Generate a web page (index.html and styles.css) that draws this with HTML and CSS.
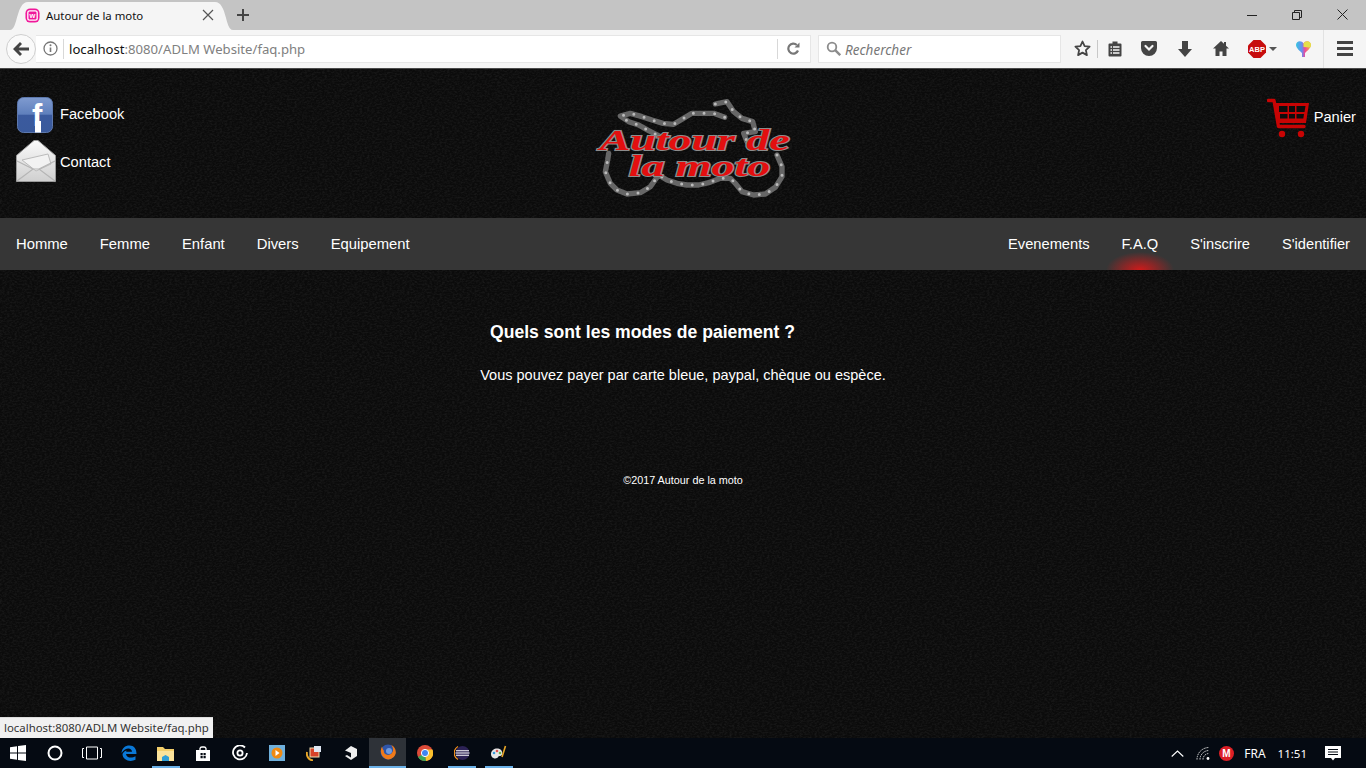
FILE: index.html
```html
<!DOCTYPE html>
<html lang="fr">

<head>
    <meta charset="UTF-8">
    <title>Autour de la moto</title>
    <link rel="stylesheet" href="styles.css">
</head>

<body>

    <!-- Browser window -->
    <div class="tabbar">
        <div class="tab">
            <svg class="favicon" width="15" height="15" viewBox="0 0 16 16">
                <rect x="0.5" y="0.5" width="15" height="15" rx="5" fill="#f0189a"/>
                <rect x="3" y="3" width="10" height="10" rx="2" fill="none" stroke="#fff" stroke-width="1.4"/>
                <text x="8" y="11" text-anchor="middle" font-size="8" font-weight="700" fill="#fff" font-family="Liberation Sans">w</text>
            </svg>
            <span class="tab-title">Autour de la moto</span>
            <svg class="tab-close" width="12" height="12" viewBox="0 0 12 12"><path d="M1 1l10 10M11 1L1 11" stroke="#555" stroke-width="1.2"/></svg>
        </div>
        <svg class="new-tab" width="12" height="12" viewBox="0 0 12 12"><path d="M6 0v12M0 6h12" stroke="#444" stroke-width="2"/></svg>
        <div class="win-controls">
            <svg width="10" height="10" viewBox="0 0 10 10"><path d="M0 5.5h10" stroke="#222"/></svg>
            <svg width="10" height="10" viewBox="0 0 10 10"><path d="M.5 2.5h7v7h-7zM2.5 2.5v-2h7v7h-2" fill="none" stroke="#222"/></svg>
            <svg width="11" height="11" viewBox="0 0 11 11"><path d="M.5.5l10 10M10.5.5l-10 10" stroke="#222"/></svg>
        </div>
    </div>

    <div class="toolbar">
        <div class="back-btn">
            <svg width="16" height="14" viewBox="0 0 16 14"><path d="M7 0L0 7l7 7 2-2-3.4-3.4H16V5.400H5.600L9 2z" fill="#444"/></svg>
        </div>
        <div class="urlbar">
            <svg class="info-icon" width="15" height="15" viewBox="0 0 15 15">
                <circle cx="7.500" cy="7.500" r="6.500" fill="none" stroke="#777" stroke-width="1.300"/>
                <path d="M7.500 6.500v4.500" stroke="#777" stroke-width="1.600"/>
                <circle cx="7.500" cy="4.300" r="1" fill="#777"/>
            </svg>
            <span class="url-sep"></span>
            <span class="url-text"><b>localhost</b>:8080/ADLM Website/faq.php</span>
            <span class="url-sep reload-sep"></span>
            <svg class="reload" width="13" height="13" viewBox="0 0 13 13">
                <path d="M11 8.500A5 5 0 1 1 9.800 3" fill="none" stroke="#777" stroke-width="2.200"/>
                <path d="M7.500 5.500h5v-5z" fill="#777"/>
            </svg>
        </div>
        <div class="searchbar">
            <svg width="15" height="15" viewBox="0 0 15 15">
                <circle cx="6" cy="6" r="4.300" fill="none" stroke="#8c8c8c" stroke-width="1.800"/>
                <path d="M9.200 9.200l5 5" stroke="#8c8c8c" stroke-width="2.400"/>
            </svg>
            <span>Rechercher</span>
        </div>
        <div class="tool star">
            <svg width="17" height="17" viewBox="0 0 17 17"><path d="M8.500 1.500l2.100 4.600 5 .6-3.700 3.400 1 5-4.400-2.500-4.400 2.500 1-5L1.400 6.700l5-.6z" fill="none" stroke="#444" stroke-width="1.800" stroke-linejoin="round"/></svg>
        </div>
        <span class="tool-sep"></span>
        <div class="tool clip">
            <svg width="14" height="16" viewBox="0 0 14 16">
                <path d="M1.500 2.500h11a1 1 0 0 1 1 1v11a1 1 0 0 1-1 1h-11a1 1 0 0 1-1-1v-11a1 1 0 0 1 1-1z" fill="#444"/>
                <rect x="4.500" y="0.500" width="5" height="3" fill="#444"/>
                <path d="M2.500 6h1.500M5 6h6.500M2.500 9h1.500M5 9h6.500M2.500 12h1.500M5 12h6.500" stroke="#f5f5f5" stroke-width="1.500"/>
            </svg>
        </div>
        <div class="tool">
            <svg width="16" height="15" viewBox="0 0 16 15">
                <path d="M1.500 0h13A1.500 1.500 0 0 1 16 1.500V7A8 8 0 0 1 0 7V1.500A1.500 1.500 0 0 1 1.500 0z" fill="#444"/>
                <path d="M4.500 5L8 8.500 11.500 5" fill="none" stroke="#f5f5f5" stroke-width="2.200" stroke-linecap="round"/>
            </svg>
        </div>
        <div class="tool">
            <svg width="14" height="16" viewBox="0 0 14 16"><path d="M4 0h6v8h4l-7 8-7-8h4z" fill="#444"/></svg>
        </div>
        <div class="tool">
            <svg width="16" height="15" viewBox="0 0 16 15"><path d="M8 0L0 7.500h2.500V15h4v-4.500h3V15h4V7.500H16l-3-2.800V1h-2v1.800z" fill="#444"/></svg>
        </div>
        <div class="tool abp">
            <svg width="18" height="18" viewBox="0 0 18 18">
                <path d="M5.500 0h7L18 5.500v7L12.500 18h-7L0 12.500v-7z" fill="#c70d0d"/>
                <text x="9" y="11.800" text-anchor="middle" font-size="7.500" font-weight="700" fill="#fff" font-family="Liberation Sans">ABP</text>
            </svg>
            <span class="abp-arrow"></span>
        </div>
        <div class="tool">
            <svg width="15" height="17" viewBox="0 0 15 17">
                <defs>
                    <linearGradient id="heartFill" x1="0" y1="0" x2="1" y2="0">
                        <stop offset="0" stop-color="#35c6e0"/>
                        <stop offset="0.400" stop-color="#6a8cf0"/>
                        <stop offset="0.600" stop-color="#f04a9a"/>
                        <stop offset="1" stop-color="#f6b63a"/>
                    </linearGradient>
                </defs>
                <path d="M7.500 3.500C6 0 0 .5 0 5c0 3 4 6 6 8v4h3v-4c2-2 6-5 6-8 0-4.500-6-5-7.500-1.500z" fill="url(#heartFill)"/>
                <path d="M7.500 3.500C9 0 15 .5 15 5c0 .8-.3 1.600-.8 2.400L7.500 7z" fill="#e4e04a"/>
            </svg>
        </div>
        <span class="tool-sep last"></span>
        <div class="tool menu">
            <span></span><span></span><span></span>
        </div>
    </div>

    <!-- Site -->
    <div class="page">
        <header class="site-header">
            <div class="social">
                <a class="social-row fb-row">
                    <svg class="fb-icon" width="36" height="36" viewBox="0 0 36 36">
                        <defs>
                            <linearGradient id="fbFill" x1="0" y1="0" x2="0" y2="1">
                                <stop offset="0" stop-color="#7f9bd0"/>
                                <stop offset="0.480" stop-color="#5f7fbc"/>
                                <stop offset="0.500" stop-color="#3b5a9e"/>
                                <stop offset="1" stop-color="#3a5a9c"/>
                            </linearGradient>
                        </defs>
                        <rect x="0.500" y="0.500" width="35" height="35" rx="6" fill="url(#fbFill)" stroke="#5d78ad"/>
                        <rect x="18" y="24" width="6" height="11.500" fill="#fff"/>
                        <text x="15" y="28.500" font-size="31" font-weight="700" fill="#fff" font-family="Liberation Sans">f</text>
                    </svg>
                    <span>Facebook</span>
                </a>
                <a class="social-row mail-row">
                    <svg width="40" height="42" viewBox="0 0 40 42">
                        <defs>
                            <linearGradient id="mailFill" x1="0" y1="0" x2="0" y2="1">
                                <stop offset="0" stop-color="#fafafa"/>
                                <stop offset="1" stop-color="#cfcfcf"/>
                            </linearGradient>
                        </defs>
                        <path d="M.500 15.500L18 .500h4l17.500 15v26H.500z" fill="url(#mailFill)" stroke="#9a9a9a"/>
                        <path d="M6 20l26-6 3 10-15 7z" fill="#f2f2f2" stroke="#bbb"/>
                        <path d="M1 41l16-12h6l16 12M1 21l16 8M39 21l-16 8" fill="none" stroke="#b5b5b5" stroke-width="1.200"/>
                    </svg>
                    <span>Contact</span>
                </a>
            </div>

            <svg class="logo" width="215" height="115" viewBox="0 0 645 345">
                <g class="chain">
                    <path d="M385 42L420 35L440 65L465 85L497 95L505 125L470 130L480 155"/>
                    <path d="M413 82L380 70L350 70L315 70L290 85L260 103L228 100L195 90L165 80L130 70L100 78L125 95L155 105L185 122L220 140"/>
                    <path d="M570 195L585 230L585 260L565 292L535 312L500 315L465 305L445 280L430 265L400 265L365 278L335 285L300 285L270 280L240 270L215 255L190 290L160 308L120 312L90 300L70 280L55 245L62 210L65 190"/>
                </g>
                <g class="chain-dots">
                    <path d="M385 42L420 35L440 65L465 85L497 95L505 125L470 130L480 155"/>
                    <path d="M413 82L380 70L350 70L315 70L290 85L260 103L228 100L195 90L165 80L130 70L100 78L125 95L155 105L185 122L220 140"/>
                    <path d="M570 195L585 230L585 260L565 292L535 312L500 315L465 305L445 280L430 265L400 265L365 278L335 285L300 285L270 280L240 270L215 255L190 290L160 308L120 312L90 300L70 280L55 245L62 210L65 190"/>
                </g>
                <text class="logo-text" x="38" y="180" textLength="570" lengthAdjust="spacingAndGlyphs">Autour de</text>
                <text class="logo-text" x="125" y="258" textLength="425" lengthAdjust="spacingAndGlyphs">la moto</text>
            </svg>

            <a class="cart">
                <svg width="42" height="40" viewBox="0 0 42 40">
                    <path d="M1.500 2.500H7l4.500 26H37" fill="none" stroke="#c80404" stroke-width="3.400" stroke-linecap="round" stroke-linejoin="round"/>
                    <path d="M8 5h34l-3 20H11z" fill="#c80404"/>
                    <path d="M12 8h8.500v6H12zM22 8h6v6h-6zM29.500 8h9l-1 6h-8zM13 16h7.500v4.500H13zM22 16h6v4.500h-6zM29.500 16h7.500l-.7 4.500h-6.800z" fill="#0d0d0d"/>
                    <circle cx="15" cy="36" r="3.200" fill="#c80404"/>
                    <circle cx="34" cy="36" r="3.200" fill="#c80404"/>
                </svg>
                <span>Panier</span>
            </a>
        </header>

        <nav class="site-nav">
            <div class="nav-group nav-left">
                <a>Homme</a>
                <a>Femme</a>
                <a>Enfant</a>
                <a>Divers</a>
                <a>Equipement</a>
            </div>
            <div class="nav-group">
                <a>Evenements</a>
                <a class="active">F.A.Q</a>
                <a>S'inscrire</a>
                <a>S'identifier</a>
            </div>
        </nav>

        <section class="faq">
            <h2>Quels sont les modes de paiement ?</h2>
            <p>Vous pouvez payer par carte bleue, paypal, chèque ou espèce.</p>
        </section>

        <footer class="site-footer">©2017 Autour de la moto</footer>

        <div class="status-tip">localhost:8080/ADLM Website/faq.php</div>
    </div>

    <!-- Windows taskbar -->
    <div class="taskbar">
        <div class="start">
            <svg width="16" height="16" viewBox="0 0 16 16"><path d="M0 2.300l7-1v6.300H0zM8 1.100L16 0v7.600H8zM0 8.500h7v6.300l-7-1zM8 8.500h8V16l-8-1.100z" fill="#fff"/></svg>
        </div>
        <div class="task"><svg width="16" height="16" viewBox="0 0 16 16"><circle cx="8" cy="8" r="6.500" fill="none" stroke="#fff" stroke-width="2"/></svg></div>
        <div class="task"><svg width="20" height="14" viewBox="0 0 20 14"><path d="M4.500 1h11v12h-11zM2 2.500H.5v9H2M18 2.500h1.500v9H18" fill="none" stroke="#fff"/></svg></div>
        <div class="task"><svg width="16" height="16" viewBox="0 0 16 16"><path d="M.500 8C1 3 4 .500 8.500.500c4.500 0 7 3 7 8.500H5c.300 4 6 4.500 9.500 2.300v3.500C9 17.500 1.500 15 1.500 9 2.500 7 3.500 6 5.500 5.500l-.3 1.300h5.800C11 3 5 1.500.500 8z" fill="#0a78d7"/></svg></div>
        <div class="task open">
            <svg width="17" height="15" viewBox="0 0 17 15">
                <path d="M0 1h6l2 2h9v12H0z" fill="#f4cf6b"/>
                <path d="M0 5h17v10H0z" fill="#fbe39b"/>
                <path d="M5 15v-4l3.500-2 3.500 2v4z" fill="#2f9fd8"/>
            </svg>
        </div>
        <div class="task"><svg width="14" height="15" viewBox="0 0 14 15"><path d="M0 4h14v11H0z" fill="#fff"/><path d="M4 5V2.500A2 2 0 0 1 6 1h2a2 2 0 0 1 2 1.500V5" fill="none" stroke="#fff" stroke-width="1.300"/><path d="M4.500 7h2.200v2.200H4.500zM7.500 7h2.200v2.200H7.500zM4.500 10h2.200v2.200H4.500zM7.500 10h2.200v2.200H7.500z" fill="#050a12"/></svg></div>
        <div class="task"><svg width="16" height="16" viewBox="0 0 16 16"><path d="M13 2.500A7 7 0 1 0 15 8" fill="none" stroke="#fff" stroke-width="1.800"/><circle cx="8" cy="8" r="2.600" fill="none" stroke="#fff" stroke-width="1.800"/></svg></div>
        <div class="task"><svg width="16" height="16" viewBox="0 0 16 16"><rect width="16" height="16" fill="#6fb0dc"/><circle cx="8" cy="8" r="5.500" fill="#f08a13"/><path d="M6.500 5l4 3-4 3z" fill="#fff"/></svg></div>
        <div class="task"><svg width="16" height="16" viewBox="0 0 16 16"><path d="M1 7a7 7 0 0 0 6 8.500" fill="none" stroke="#e8a628" stroke-width="2"/><rect x="4" y="3" width="9" height="9" fill="#d6422a" stroke="#f4e0b0"/><rect x="8" y="1" width="7" height="6" fill="#dfe7f2"/></svg></div>
        <div class="task"><svg width="14" height="14" viewBox="0 0 14 14"><path d="M7 0l6 3v7l-6 4-6-4 2-1 1.500 1L7 11.500V7L1 4.500z" fill="#eee"/></svg></div>
        <div class="task current">
            <svg width="16" height="16" viewBox="0 0 16 16">
                <circle cx="8" cy="8" r="7.500" fill="#2f55a8"/>
                <circle cx="9" cy="7" r="3" fill="#6f9be0"/>
                <path d="M2 2.500C-.5 7 1 13 6 15c4 1.500 9-1.500 9.800-6C16 5 14 2 11 1c1.500 1.500 2 3 2 4 .5 3-2 6-5 6S3.500 9 3.800 6.500C3 5.500 2.300 4 2 2.500z" fill="#f07a18"/>
            </svg>
        </div>
        <div class="task">
            <svg width="16" height="16" viewBox="0 0 16 16">
                <circle cx="8" cy="8" r="8" fill="#dd4b39"/>
                <path d="M8 8L1 12a8 8 0 0 0 7 4h1z" fill="#3aa757"/>
                <path d="M8 4.500h7.400A8 8 0 0 1 9 16z" fill="#fbc02d"/>
                <circle cx="8" cy="8" r="3.600" fill="#3f85f2" stroke="#fff"/>
            </svg>
        </div>
        <div class="task open">
            <svg width="16" height="16" viewBox="0 0 16 16">
                <circle cx="8.500" cy="8" r="7" fill="#2c2255"/>
                <path d="M2 5.800h13M1.500 8h14M2 10.200h13" stroke="#fff" stroke-width="1.100"/>
                <path d="M4 1.500a7.500 7.500 0 0 0 0 13" fill="none" stroke="#f7941e" stroke-width="1.300"/>
            </svg>
        </div>
        <div class="task open">
            <svg width="16" height="16" viewBox="0 0 16 16">
                <path d="M0 9c0-4 4-6 7-5.500 3 .5 5 3 4 6-.500 2-3 1-4 2.500C6 14.500 0 14 0 9z" fill="#e6e6e6"/>
                <circle cx="3" cy="8" r="1.300" fill="#3a9ad9"/>
                <circle cx="6" cy="6" r="1.300" fill="#e05050"/>
                <circle cx="9" cy="8" r="1.300" fill="#67b34a"/>
                <path d="M11 12L14.500 1" stroke="#e8a628" stroke-width="1.600"/>
            </svg>
        </div>
        <div class="tray">
            <svg width="13" height="7" viewBox="0 0 13 7"><path d="M.7 6.500L6.500 1l5.800 5.500" fill="none" stroke="#fff" stroke-width="1.100"/></svg>
            <svg class="tray-wifi" width="15" height="14" viewBox="0 0 15 14"><path d="M1 13.500A12 12 0 0 1 13 1.500M4 13.500a9 9 0 0 1 9-9M7 13.500a6 6 0 0 1 6-6" fill="none" stroke="#ddd" stroke-dasharray="1.500 .8"/><circle cx="12" cy="12.500" r="1.400" fill="#fff"/></svg>
            <svg class="tray-mega" width="15" height="15" viewBox="0 0 15 15">
                <circle cx="7.500" cy="7.500" r="7.500" fill="#dc1f26"/>
                <text x="7.500" y="11" text-anchor="middle" font-size="10" font-weight="700" fill="#fff" font-family="Liberation Sans">M</text>
            </svg>
            <span class="tray-lang">FRA</span>
            <span class="tray-time">11:51</span>
            <svg class="tray-notif" width="16" height="15" viewBox="0 0 16 15"><path d="M0 0h16v12h-6l-2 2.500L6 12H0z" fill="#fff"/><path d="M3 3.500h10M3 6h10M3 8.500h10" stroke="#050a12"/></svg>
        </div>
    </div>

</body>

</html>
```

FILE: styles.css
```css
* {
    box-sizing: border-box;
}

html,
body {
    margin: 0;
    height: 768px;
    overflow: hidden;
}

body {
    display: flex;
    flex-direction: column;
    font-family: 'Liberation Sans', Arial, sans-serif;
    background-color: #0d0d0d;
}

/* browser tabs */
.tabbar {
    display: flex;
    align-items: flex-end;
    height: 30px;
    padding-left: 10px;
    background-color: #c4c4c4;
    flex: none;
}

.tab {
    display: flex;
    align-items: center;
    width: 223px;
    height: 28px;
    padding: 0 19px 2px 15px;
    background-color: #f5f5f5;
    clip-path: path("M0 28 C8 28 6 0 18 0 H205 C217 0 215 28 223 28 Z");
}

.favicon {
    flex: none;
}

.tab-title {
    flex: 1;
    margin-left: 6px;
    font-family: 'Noto Sans', sans-serif;
    font-size: 11.4px;
    color: #111;
}

.new-tab {
    margin: 0 0 9px 4px;
}

.win-controls {
    display: flex;
    align-items: center;
    gap: 35px;
    margin-left: auto;
    padding: 0 18px 10px 0;
}

/* browser toolbar */
.toolbar {
    display: flex;
    align-items: center;
    height: 39px;
    padding: 0 0 1px 6px;
    background-color: #f5f5f5;
    border-bottom: 1px solid #4a4a4a;
    flex: none;
}

.back-btn {
    display: flex;
    align-items: center;
    justify-content: center;
    width: 30px;
    height: 30px;
    background-color: #fafafa;
    border: 1px solid #cfcfcf;
    border-radius: 50%;
    flex: none;
}

.urlbar {
    display: flex;
    align-items: center;
    width: 775px;
    height: 28px;
    background-color: #fff;
    border: 1px solid #e6e6e6;
    border-left: none;
    flex: none;
}

.info-icon {
    margin-left: 7px;
}

.url-sep {
    width: 1px;
    height: 20px;
    margin-left: 5px;
    background-color: #d8d8d8;
}

.url-text {
    width: 708px;
    margin-left: 5px;
    padding-top: 1px;
    font-family: 'Noto Sans', sans-serif;
    font-size: 13.15px;
    color: #808080;
}

.url-text b {
    font-weight: 400;
    color: #111;
}

.reload-sep {
    margin-left: 0;
}

.reload {
    margin-left: 9px;
}

.searchbar {
    display: flex;
    align-items: center;
    gap: 4px;
    width: 243px;
    height: 28px;
    margin-left: 7px;
    padding-left: 7px;
    background-color: #fff;
    border: 1px solid #e6e6e6;
    font-family: 'Noto Sans', sans-serif;
    font-size: 13.5px;
    font-style: italic;
    color: #777;
    flex: none;
}

.searchbar span {
    padding-top: 2px;
}

.tool {
    display: flex;
    align-items: center;
    justify-content: center;
    width: 36px;
    height: 30px;
    flex: none;
}

.star {
    width: 30px;
    margin-left: 6px;
}

.clip {
    width: 33px;
}

.abp {
    width: 46px;
    gap: 3px;
    justify-content: flex-start;
    padding-left: 9px;
}

.abp-arrow {
    width: 0;
    height: 0;
    border-left: 4px solid transparent;
    border-right: 4px solid transparent;
    border-top: 4px solid #555;
}

.tool-sep {
    width: 1px;
    height: 18px;
    background-color: #c8c8c8;
    flex: none;
}

.tool-sep.last {
    height: 38px;
    margin-left: 2px;
    background-color: #e2e2e2;
}

.menu {
    flex-direction: column;
    gap: 3px;
    width: 42px;
}

.menu span {
    width: 16px;
    height: 3px;
    background-color: #444;
}

/* site */
.page {
    position: relative;
    display: flex;
    flex-direction: column;
    flex: 1;
    color: #fff;
    background-color: #0b0b0b;
    background-image: url("data:image/svg+xml,%3Csvg xmlns='http://www.w3.org/2000/svg' width='400' height='400'%3E%3Cfilter id='n'%3E%3CfeTurbulence type='fractalNoise' baseFrequency='.4 .6' numOctaves='3' stitchTiles='stitch'/%3E%3CfeColorMatrix values='0 0 0 0 1 0 0 0 0 1 0 0 0 0 1 .12 0 0 0 -.045'/%3E%3C/filter%3E%3Crect width='400' height='400' filter='url(%23n)'/%3E%3C/svg%3E");
}

.site-header {
    display: flex;
    justify-content: space-between;
    align-items: flex-start;
    height: 149px;
    padding-left: 16px;
    padding-right: 10px;
}

.social {
    display: flex;
    flex-direction: column;
    width: 116px;
    padding-top: 28px;
}

.social-row {
    display: flex;
    align-items: center;
    gap: 7px;
    height: 36px;
    font-size: 14.67px;
}

.fb-row span {
    margin-bottom: 2px;
}

.fb-icon {
    margin-left: 1px;
}

.mail-row {
    height: 42px;
    margin-top: 7px;
    gap: 4px;
}

.mail-row span {
    padding-top: 2px;
}

.logo {
    margin-top: 21px;
    margin-right: 10px;
}

.chain path {
    fill: none;
    stroke: #666;
    stroke-width: 16;
    stroke-linecap: round;
    stroke-linejoin: round;
}

.chain-dots path {
    fill: none;
    stroke: #bbb;
    stroke-width: 9;
    stroke-linecap: round;
    stroke-dasharray: 0 32;
}

.logo-text {
    font-family: 'Liberation Serif', serif;
    font-size: 90px;
    font-weight: 700;
    font-style: italic;
    fill: #e30f0f;
    stroke: #8c8c8c;
    stroke-width: 6px;
    paint-order: stroke;
}

.cart {
    display: flex;
    align-items: center;
    gap: 5px;
    padding-top: 29px;
    font-size: 14.67px;
}

.cart span {
    margin-bottom: 2px;
}

.site-nav {
    display: flex;
    justify-content: space-between;
    height: 52px;
    background-color: #363636;
    flex: none;
}

.nav-group {
    display: flex;
}

.nav-group a {
    padding: 0 16px;
    font-size: 14.67px;
    line-height: 52px;
    color: #fff;
}

.nav-left a {
    font-size: 14.8px;
}

.nav-group a.active {
    background-image: radial-gradient(ellipse 34px 18px at 50% 100%, #d01a1a, rgba(208, 26, 26, 0) 100%);
}

.faq {
    padding-top: 52px;
    text-align: center;
}

.faq h2 {
    margin: 0;
    padding-right: 81px;
    font-size: 17.6px;
    line-height: 20px;
}

.faq p {
    margin: 25px 0 0;
    font-size: 14.5px;
    line-height: 17px;
}

.site-footer {
    margin-top: 90px;
    font-size: 10.8px;
    line-height: 12px;
    text-align: center;
}

.status-tip {
    position: absolute;
    left: 0;
    bottom: 0;
    width: 213px;
    height: 21px;
    padding-left: 4px;
    background-color: #f1f1f1;
    border-top: 1px solid #ddd;
    font-family: 'Noto Sans', sans-serif;
    font-size: 11.4px;
    line-height: 20px;
    color: #333;
    white-space: nowrap;
}

/* taskbar */
.taskbar {
    display: flex;
    align-items: center;
    height: 30px;
    background-color: #050a12;
    flex: none;
}

.start {
    display: flex;
    align-items: center;
    justify-content: center;
    width: 36px;
    height: 30px;
}

.task {
    display: flex;
    align-items: center;
    justify-content: center;
    width: 37px;
    height: 30px;
}

.task.open {
    background: linear-gradient(#6bb1e8, #6bb1e8) center bottom / 28px 2px no-repeat;
}

.task.current {
    background-color: #2e3238;
    border-bottom: 2px solid #6bb1e8;
}

.tray {
    display: flex;
    align-items: center;
    margin-left: auto;
    padding-right: 25px;
    font-family: 'Noto Sans', sans-serif;
    font-size: 12px;
    color: #fff;
}

.tray-wifi {
    margin-left: 12px;
}

.tray-mega {
    margin-left: 8px;
}

.tray-lang {
    margin-left: 10px;
}

.tray-time {
    margin-left: 12px;
    font-size: 11.5px;
}

.tray-notif {
    margin-left: 18px;
}
```
